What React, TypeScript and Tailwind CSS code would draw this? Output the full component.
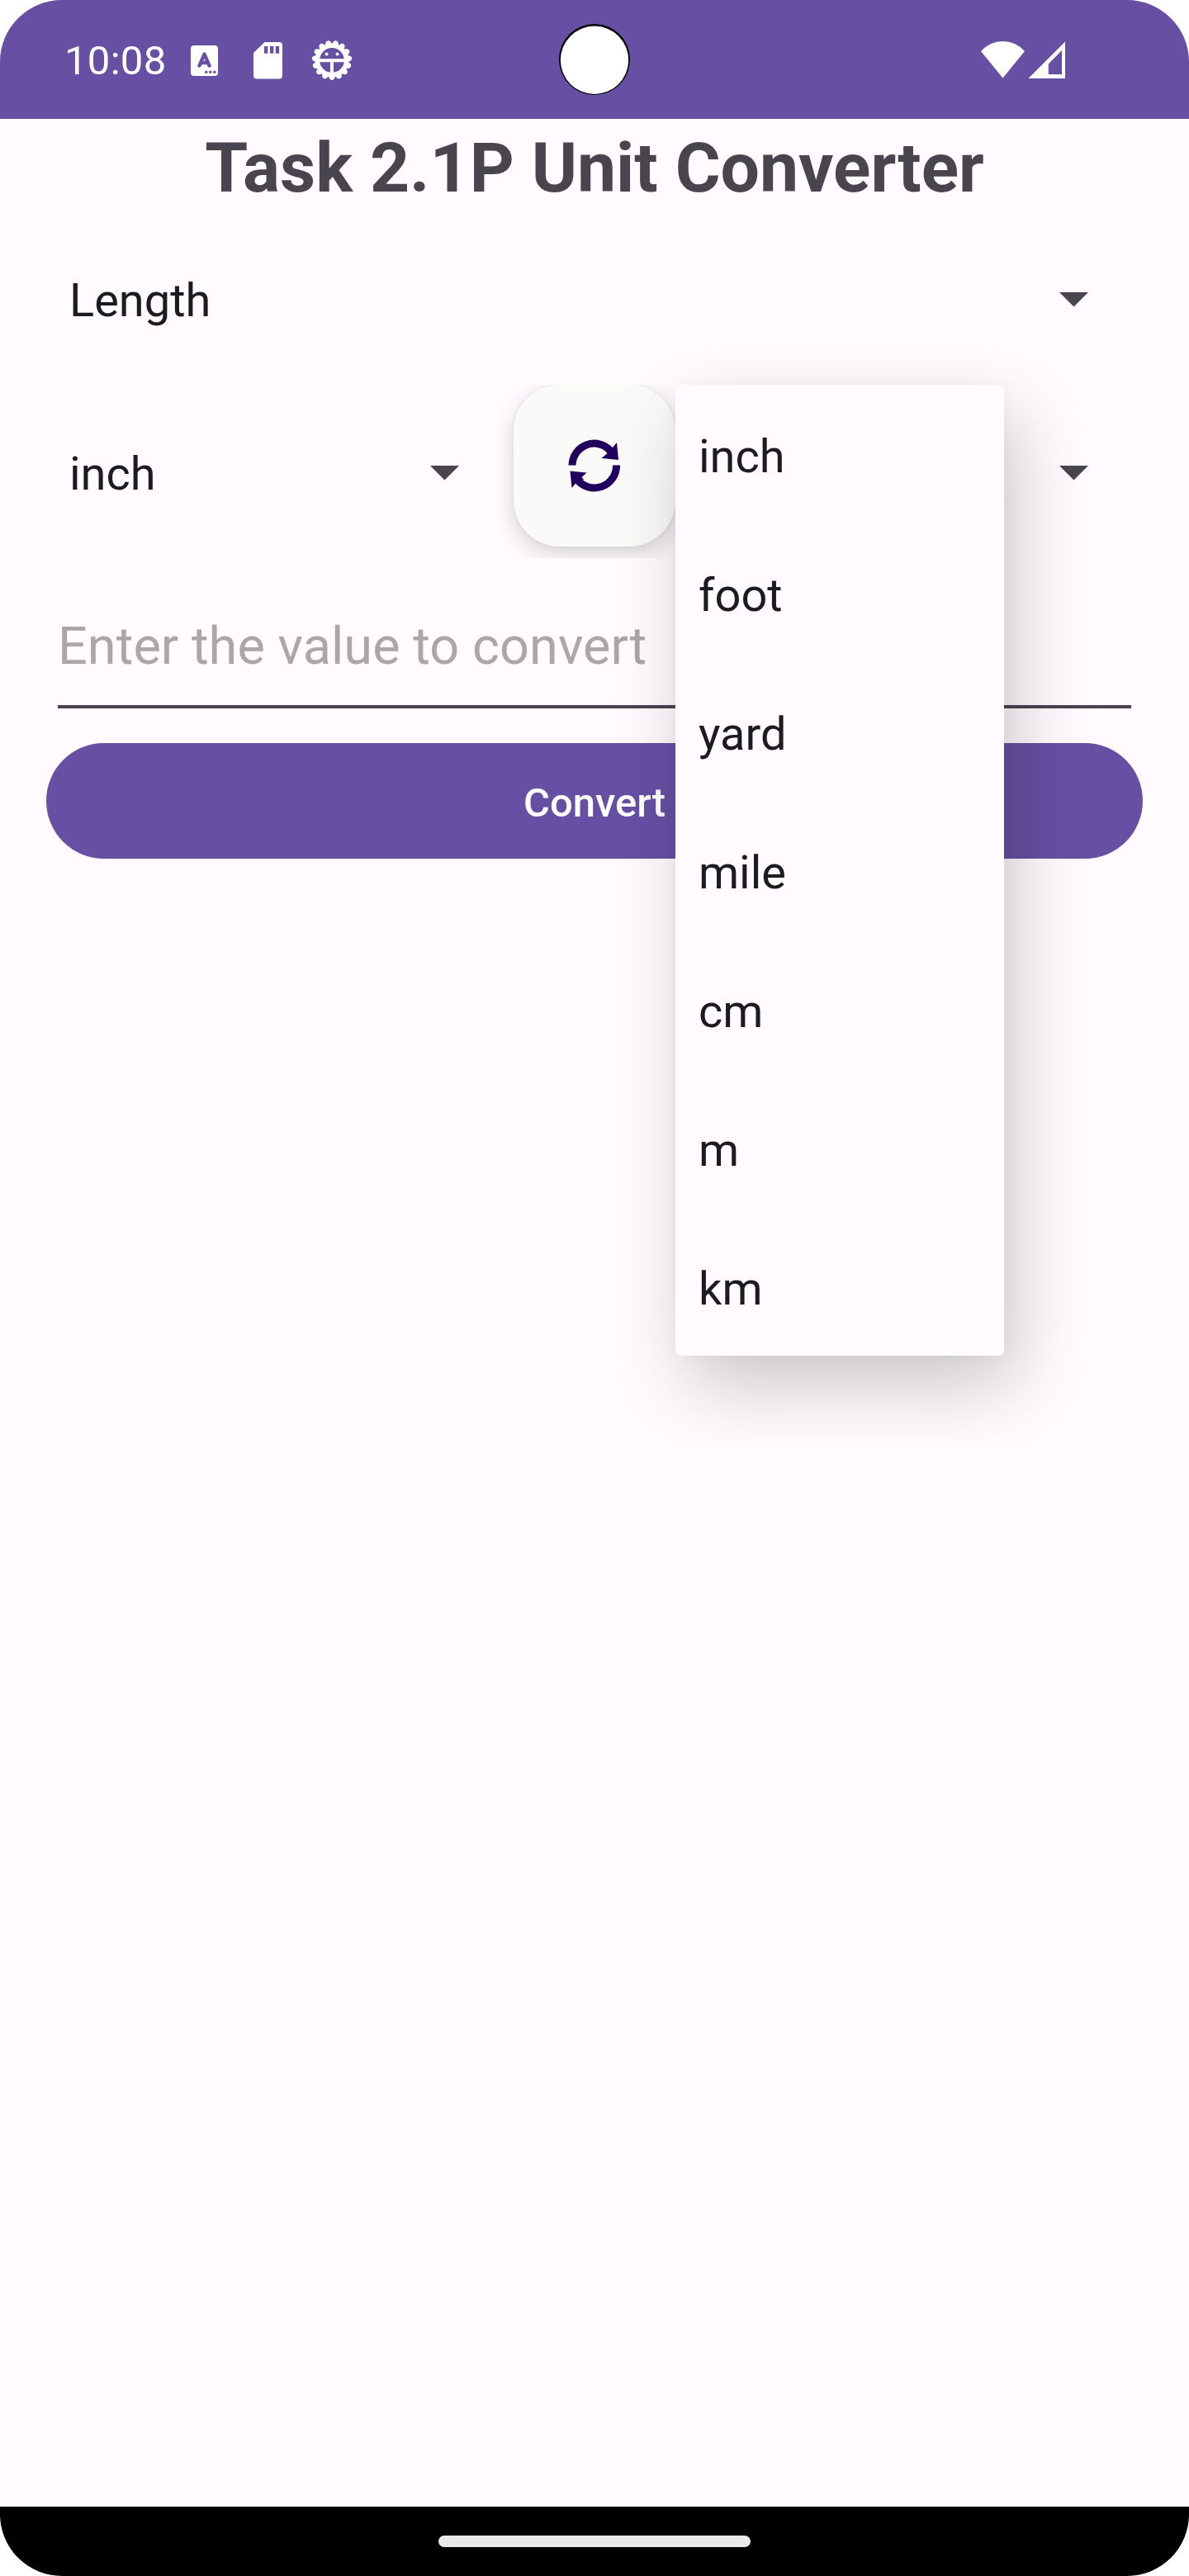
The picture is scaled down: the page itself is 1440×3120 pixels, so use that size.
import React from "react";

const units = ["inch", "foot", "yard", "mile", "cm", "m", "km"];

function Caret() {
  return (
    <svg width="35" height="18" viewBox="0 0 35 18" className="shrink-0">
      <path d="M0 0H35L17.5 17.5Z" fill="#49454f" />
    </svg>
  );
}

function Spinner({ label, className }: { label: string; className: string }) {
  return (
    <div className={"flex items-start " + className}>
      <span className="flex-1 text-[56px] leading-[66px] text-[#1c1b1f]">{label}</span>
      <div className="pt-[23px]">
        <Caret />
      </div>
    </div>
  );
}

function KeyboardIcon() {
  return (
    <svg width="33" height="37" viewBox="0 0 33 37">
      <rect width="33" height="37" rx="4" fill="#fff" />
      <path d="M10.5 24.5L16.5 10.5L22.5 24.5M12.5 21H20.5" fill="none" stroke="#6750a4" strokeWidth="4.4" strokeLinecap="round" strokeLinejoin="round" />
      <circle cx="18.8" cy="32.3" r="1.7" fill="#6750a4" />
      <circle cx="23.8" cy="32.3" r="1.7" fill="#6750a4" />
      <circle cx="28.8" cy="32.3" r="1.7" fill="#6750a4" />
    </svg>
  );
}

function SdIcon() {
  return (
    <svg width="35" height="45" viewBox="0 0 35 45">
      <path d="M13.5 0H31Q35 0 35 4V40.500Q35 44.500 31 44.500H4Q0 44.500 0 40.500V13Z" fill="#fff" />
      <path d="M13 5h4.300v8.700H13zM20 5h4.300v8.700H20zM26.800 5h4.300v8.700h-4.300z" fill="#6750a4" />
    </svg>
  );
}

function BugIcon() {
  const teeth = Array.from({ length: 15 }, (_, i) => 90 + i * 24);
  return (
    <svg width="50" height="50" viewBox="-25 -25 50 50">
      <circle r="17.600" fill="none" stroke="#fff" strokeWidth="5.400" />
      {teeth.map((a) => (
        <path key={a} d="M17 -4.500L22.600 -2.300Q24.800 0 22.600 2.300L17 4.500Z" fill="#fff" stroke="#fff" strokeWidth="1" transform={`rotate(${a})`} />
      ))}
      <path d="M0 .5V17" stroke="#fff" strokeWidth="4" />
      <path d="M-16 .2H16" stroke="#fff" strokeWidth="4" />
      <circle cx="-6.500" cy="-7.500" r="2" fill="#fff" />
      <circle cx="6.500" cy="-7.500" r="2" fill="#fff" />
    </svg>
  );
}

function SwapIcon() {
  return (
    <svg width="64" height="64" viewBox="0 0 64 64">
      <g fill="none" stroke="#21005d" strokeWidth="9">
        <path d="M5 31.500A26.700 26.700 0 0 1 52 14.500" />
        <path d="M58.500 31.500A26.700 26.700 0 0 1 11.500 49.500" />
      </g>
      <path d="M59 4L61 25L40.500 23L47.500 17L45 14L54 10Z" fill="#21005d" />
      <path d="M4.500 59L2.500 38.500L22.500 40.500L16.500 46L19 49L9.500 53Z" fill="#21005d" />
    </svg>
  );
}

export default function App() {
  return (
    <div className="h-[3120px] w-[1440px] bg-white font-['Roboto',sans-serif]">
      <div className="relative flex h-full flex-col overflow-hidden rounded-[75px] bg-[#fffbff]">
        <header className="relative flex h-[144px] shrink-0 items-start bg-[#6750a4]">
          <span className="ml-[78px] mt-[45px] w-[153px] text-[49px] leading-[58px] tracking-[0.3px] text-white">10:08</span>
          <div className="mt-[55px] w-[76px]"><KeyboardIcon /></div>
          <div className="mt-[51px] w-[69.500px]"><SdIcon /></div>
          <div className="mt-[48px]"><BugIcon /></div>
          <svg width="86" height="86" viewBox="0 0 86 86" className="absolute left-[677px] top-[29px]">
            <circle cx="43" cy="43" r="43" fill="#000" />
            <circle cx="43" cy="43.800" r="41.200" fill="#fff" />
          </svg>
          <svg width="103" height="46" viewBox="0 0 103 46" className="ml-auto mr-[149px] mt-[50px]">
            <path d="M0 12Q11 0 26.500 0T53 12L26.500 44.500Z" fill="#fff" />
            <path fillRule="evenodd" d="M102 .5V45H57.500ZM98 11L81.800 27.500V40H98Z" fill="#fff" />
          </svg>
        </header>

        <main className="relative flex-1">
          <h1 className="pt-[11px] text-center text-[84px] font-bold leading-[98px] text-[#49454f]">Task 2.1P Unit Converter</h1>
          <Spinner label="Length" className="ml-[84px] mt-[78px] w-[1234px]" />

          <div className="mt-[69px] flex h-[210px] items-start">
            <Spinner label="inch" className="ml-[84px] mt-[75px] w-[472px]" />
            <div className="ml-[66px] h-[210px] [clip-path:inset(0_-40px_0_-40px)]">
              <div className="flex size-[196px] items-center justify-center rounded-[56px] bg-[#fafaf8] shadow-[0_9px_28px_rgba(0,0,0,0.17),0_0_6px_rgba(0,0,0,0.05)]">
                <SwapIcon />
              </div>
            </div>
            <div className="ml-[465px] pt-[98px]"><Caret /></div>
          </div>

          <div className="mx-[70px] mt-[70px] h-[112px] border-b-4 border-[#49454f] text-[63px] leading-[74px] tracking-[0.06px] text-[#a9a7a9]">Enter the value to convert</div>
          <button className="mx-[56px] mt-[42px] flex h-[140px] w-[1328px] items-center justify-center rounded-full bg-[#6750a4] pt-[5px] text-[49px] font-medium leading-[58px] text-white">Convert</button>

          <ul className="absolute left-[818px] top-[322px] w-[398px] rounded-[7px] bg-[#fffbff] shadow-[14px_36px_92px_rgba(0,0,0,0.21),0_0_20px_rgba(0,0,0,0.03)] [clip-path:inset(-120px_-140px_-112px_-120px)]">
            {units.map((unit) => (
              <li key={unit} className="flex h-[168px] items-center pl-[28px] pt-[6px] text-[56px] leading-[66px] text-[#1c1b1f]">{unit}</li>
            ))}
          </ul>
        </main>

        <footer className="flex h-[84px] shrink-0 justify-center bg-black pt-[35px]">
          <div className="h-[14px] w-[378px] rounded-full bg-[#eaeaea]" />
        </footer>
      </div>
    </div>
  );
}
